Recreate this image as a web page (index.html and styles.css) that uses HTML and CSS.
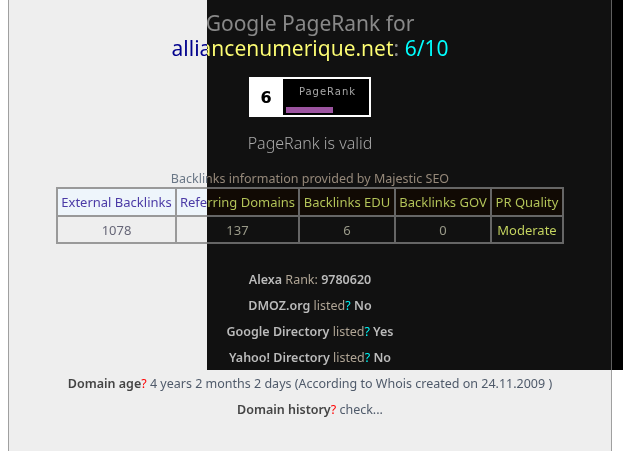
FILE: index.html
```html
<!DOCTYPE html>
<html>
<head>
<meta charset="utf-8">
<link rel="stylesheet" href="styles.css">
</head>
<body>
<div class="panel">
  <h1 class="title">Google PageRank for<br><span class="domain">alliancenumerique.net</span>: <span class="score">6/10</span></h1>
  <div class="badge">
    <div class="badge-num">6</div>
    <div class="badge-body">
      <div class="badge-label">PageRank</div>
      <div class="badge-bar"></div>
    </div>
  </div>
  <p class="valid">PageRank is valid</p>
  <p class="source">Backlinks information provided by Majestic SEO</p>
  <table class="links">
    <colgroup>
      <col class="c1"><col class="c2"><col class="c3"><col class="c4"><col class="c5">
    </colgroup>
    <tr>
      <th>External Backlinks</th>
      <th>Referring Domains</th>
      <th>Backlinks EDU</th>
      <th>Backlinks GOV</th>
      <th>PR Quality</th>
    </tr>
    <tr>
      <td>1078</td>
      <td>137</td>
      <td>6</td>
      <td>0</td>
      <td class="quality">Moderate</td>
    </tr>
  </table>
  <div class="facts">
    <p><b>Alexa</b> Rank: <b>9780620</b></p>
    <p><b>DMOZ.org</b> listed<span class="q">?</span> <b>No</b></p>
    <p><b>Google Directory</b> listed<span class="q">?</span> <b>Yes</b></p>
    <p><b>Yahoo! Directory</b> listed<span class="q">?</span> <b>No</b></p>
    <p><b>Domain age</b><span class="q">?</span> 4 years 2 months 2 days (According to Whois created on 24.11.2009 )</p>
    <p><b>Domain history</b><span class="q">?</span> check...</p>
  </div>
</div>
<div class="invert"></div>
</body>
</html>
```
FILE: styles.css
```css
html, body {
  margin: 0;
  padding: 0;
  background: #fff;
  height: 451px;
  overflow: hidden;
}
body {
  font-family: "Noto Sans", "Open Sans", sans-serif;
  color: #555;
}
.panel {
  margin-left: 8px;
  width: 602px;
  height: 470px;
  background: #eee;
  border-left: 1px solid #a0a0a0;
  border-right: 1px solid #a0a0a0;
  padding-top: 11px;
  box-sizing: content-box;
  text-align: center;
}
.title {
  margin: 0;
  font-size: 21px;
  line-height: 25px;
  font-weight: normal;
  color: #777;
}
.domain { color: #00008c; }
.score { color: #ff0000; }

.badge {
  display: flex;
  width: 120px;
  height: 38px;
  margin: 16px auto 0 auto;
  border: 1px solid #000;
}
.badge-num {
  width: 32px;
  background: #000;
  color: #fff;
  font-family: "DejaVu Sans", sans-serif;
  font-weight: bold;
  font-size: 16px;
  display: flex;
  align-items: center;
  justify-content: center;
}
.badge-body {
  flex: 1;
  background: #fff;
  border: 1px solid #000;
  display: flex;
  flex-direction: column;
  padding: 7px 0 0 3px;
  box-sizing: border-box;
}
.badge-label {
  font-family: "DejaVu Sans", sans-serif;
  font-size: 10px;
  letter-spacing: 1px;
  color: #555;
  line-height: 12px;
  text-align: center;
}
.badge-bar {
  width: 47px;
  height: 6px;
  margin-top: 9px;
  background: #63ab5f;
}
.valid {
  margin: 16px 0 0 0;
  font-size: 16px;
  line-height: 20px;
  font-weight: 300;
  color: #555;
}
.source {
  margin: 18px 0 0 0;
  font-size: 12.5px;
  line-height: 16px;
  color: #6a7786;
}
.links {
  margin: 0 auto;
  width: 506px;
  table-layout: fixed;
  border-collapse: separate;
  border-spacing: 0;
  border: 1px solid #999;
  font-size: 13px;
}
.c1 { width: 119px; }
.c2 { width: 123px; }
.c3 { width: 96px; }
.c4 { width: 96px; }
.c5 { width: 72px; }
.links th, .links td {
  border: 1px solid #999;
  padding: 0;
  white-space: nowrap;
}
.links th {
  height: 26px;
  background: #eef5fb;
  color: #4b3aa6;
  font-weight: normal;
}
.links td {
  height: 25px;
  color: #667;
}
.links td.quality { color: #3a2aa0; }
.facts {
  margin-top: 23px;
  font-size: 12.5px;
}
.facts p {
  margin: 0;
  line-height: 26px;
  color: #4f5a6a;
}
.facts b {
  color: #444;
  font-weight: 600;
}
.q { color: #ff0000; }

.invert {
  position: absolute;
  left: 207px;
  top: 0;
  width: 416px;
  height: 370px;
  background: #fff;
  mix-blend-mode: difference;
  pointer-events: none;
}
```
